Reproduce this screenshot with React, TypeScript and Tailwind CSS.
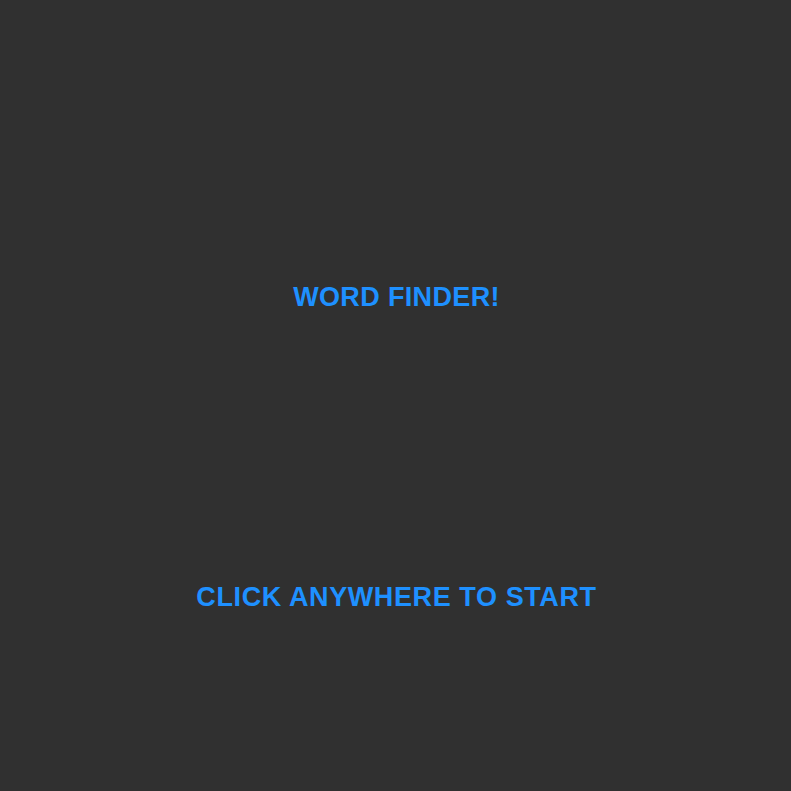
export default function App() {
  return (
    <div className="flex h-[791px] w-full cursor-pointer flex-col items-center bg-[#303030] pl-[2px] pt-[281px] font-['Liberation_Sans',Arial,sans-serif] font-bold text-[#1e90ff]">
      <h1 className="text-[27px] leading-[32px] tracking-[0.35px]">WORD FINDER!</h1>
      <p className="mt-[268px] text-[27px] leading-[32px] tracking-[0.6px]">CLICK ANYWHERE TO START</p>
    </div>
  );
}
